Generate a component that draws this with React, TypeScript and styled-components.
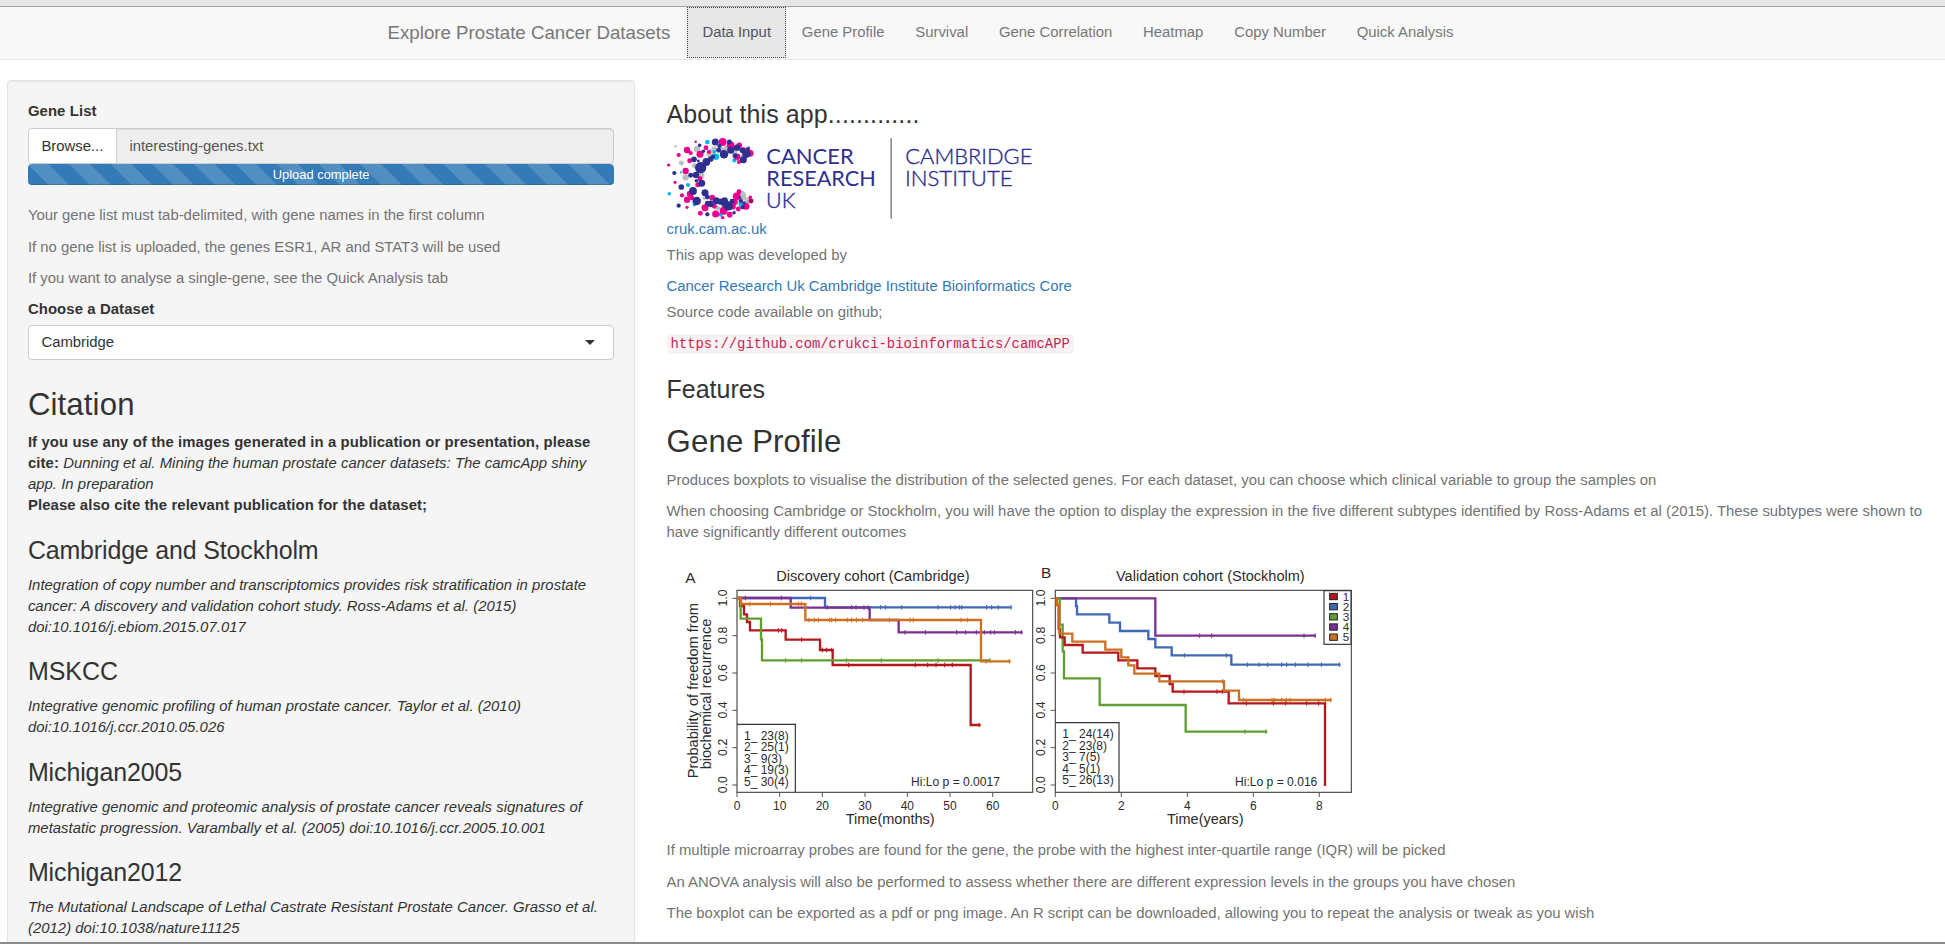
import React from "react";
import styled, { createGlobalStyle } from "styled-components";

const GlobalStyle = createGlobalStyle`
  * { box-sizing: border-box; }
  html, body { margin: 0; padding: 0; overflow: hidden; }
  body {
    background: #fff;
    color: #333;
    font: 14.88px/20.8px "Liberation Sans", Arial, sans-serif;
  }
  b { letter-spacing: 0.1px; }
  i { letter-spacing: 0.04px; }
`;

const Page = styled.div`
  height: 944px;
  overflow: hidden;
  display: flex;
  flex-direction: column;
  border-bottom: 2px solid #8a8a8a;
`;

const WindowEdge = styled.div`
  height: 6.5px;
  flex: none;
  background: #e6e6e6;
  border-bottom: 1.5px solid #a3a3a3;
`;

const Navbar = styled.nav`
  flex: none;
  height: 53px;
  margin-bottom: 20.5px;
  padding-left: 387.5px;
  display: flex;
  background: #f8f8f8;
  border-bottom: 1px solid #e7e7e7;
`;

const Brand = styled.div`
  width: 299.5px;
  font-size: 18.72px;
  line-height: 51px;
  color: #777;
  white-space: nowrap;
`;

const NavLink = styled.a<{ $active?: boolean }>`
  height: 51px;
  padding: 0 15.4px;
  line-height: 51px;
  white-space: nowrap;
  color: ${(p) => (p.$active ? "#555" : "#777")};
  background: ${(p) => (p.$active ? "#e7e7e7" : "transparent")};
  outline: ${(p) => (p.$active ? "1px dotted #444" : "none")};
  outline-offset: -1px;
`;

const Columns = styled.div`
  flex: 1;
  min-height: 0;
  display: flex;
  align-items: flex-start;
`;

const Sidebar = styled.aside`
  flex: none;
  width: 628px;
  height: 900px;
  margin-left: 7.4px;
  padding: 20px 20px 0 19.5px;
  background: #f5f5f5;
  border: 1px solid #e3e3e3;
  border-radius: 4px;
  box-shadow: inset 0 1px 1px rgba(0, 0, 0, 0.05);
`;

const Main = styled.main`
  flex: 1;
  min-width: 0;
  padding: 21px 10px 0 31.2px;
`;

const Label = styled.label<{ $gap: number }>`
  display: block;
  margin-bottom: ${(p) => p.$gap}px;
  font-weight: 700;
  letter-spacing: 0.1px;
`;

const FileField = styled.div`
  display: flex;
  height: 35.5px;
  border: 1px solid #ccc;
  border-radius: 4px;
  overflow: hidden;
  background: #eee;
  line-height: 34.5px;
  box-shadow: inset 0 1px 1px rgba(0, 0, 0, 0.075);
`;

const BrowseButton = styled.div`
  width: 88px;
  padding-left: 12.5px;
  background: #fff;
  border-right: 1px solid #ccc;
`;

const FileName = styled.div`
  padding-left: 12.5px;
  color: #555;
`;

const Progress = styled.div`
  height: 21px;
  margin-bottom: 20.5px;
  border-radius: 4px;
  background-color: #337ab7;
  background-image: linear-gradient(
    45deg,
    rgba(255, 255, 255, 0.15) 25%,
    transparent 25%,
    transparent 50%,
    rgba(255, 255, 255, 0.15) 50%,
    rgba(255, 255, 255, 0.15) 75%,
    transparent 75%
  );
  background-size: 41.6px 41.6px;
  box-shadow: inset 0 -1px 0 rgba(0, 0, 0, 0.15);
  color: #fff;
  font-size: 12.9px;
  line-height: 21px;
  text-align: center;
`;

const HelpText = styled.p<{ $gap?: number }>`
  margin: 0 0 ${(p) => p.$gap ?? 10.4}px;
  color: #737373;
`;

const Select = styled.div`
  height: 35px;
  margin-bottom: 28px;
  padding: 0 18px 0 12.5px;
  display: flex;
  align-items: center;
  justify-content: space-between;
  background: #fff;
  border: 1px solid #ccc;
  border-radius: 4px;
`;

const Caret = styled.span`
  border: 5px solid transparent;
  border-top-color: #333;
  border-bottom-width: 0;
`;

const H2 = styled.h2`
  margin: 0 0 10.4px;
  font-size: 31.2px;
  font-weight: 500;
  line-height: 34.3px;
  letter-spacing: 0.12px;
`;

const H3 = styled.h3<{ $after?: number; $track?: number }>`
  margin: 0 0 ${(p) => p.$after ?? 10.4}px;
  font-size: 24.96px;
  font-weight: 500;
  line-height: 27.5px;
  letter-spacing: ${(p) => p.$track ?? 0}px;
  white-space: nowrap;
`;

const Citation = styled.div<{ $gap?: number }>`
  margin-bottom: ${(p) => p.$gap ?? 21.5}px;
  white-space: nowrap;
`;

const Link = styled.a<{ $gap: number }>`
  display: block;
  margin-bottom: ${(p) => p.$gap}px;
  color: #337ab7;
`;

const CodeLine = styled.div`
  height: 20.8px;
  margin-bottom: 22px;
`;

const Code = styled.code`
  padding: 2px 4px;
  font: 13.87px "Liberation Mono", monospace;
  color: #c7254e;
  background: #f9f2f4;
  border-radius: 4px;
`;

const LogoDrawing = styled.svg`
  display: block;
  width: 380px;
  height: 82px;
`;

const Figure = styled.svg`
  display: block;
  width: 700px;
  height: 287px;
  margin: -2px 0 2.4px -1px;
`;

const NAVY = "#2e2f8f";
const PINK = "#ec008c";
const CYAN = "#00b5ee";
const GREY = "#bcbec0";

const DOTS: [string, number[][]][] = [
  [GREY, [[46, 169, 3.5], [110, 177, 9], [63, 219, 7], [102, 227, 7], [76, 262, 9], [124, 257, 8], [110, 285, 7], [151, 190, 12], [162, 177, 8], [184, 178, 7], [200, 175, 9], [222, 183, 9], [238, 203, 10], [265, 172, 5], [243, 317, 14], [262, 331, 9], [232, 334, 8], [172, 355, 7], [190, 368, 7], [151, 327, 6], [132, 325, 5]]],
  [CYAN, [[141, 156, 6.5], [62, 247, 3], [83, 285, 6], [27, 311, 5], [167, 200, 9], [162, 185, 5], [222, 211, 6], [102, 344, 5], [181, 374, 6], [242, 344, 7], [207, 155, 5]]],
  [PINK, [[106, 155, 3.5], [55, 195, 6], [80, 180, 9], [91, 189, 6], [119, 193, 10], [88, 212, 7], [25, 225, 4.5], [76, 243, 9], [44, 277, 4.5], [137, 173, 7], [146, 186, 6], [187, 156, 11], [211, 166, 11], [237, 166, 8], [269, 190, 10], [230, 200, 9], [236, 216, 6], [250, 180, 8], [113, 284, 7], [119, 266, 7], [65, 316, 6], [89, 312, 9], [80, 329, 9], [94, 323, 7], [80, 352, 4.5], [120, 370, 7], [134, 353, 10], [166, 372, 10], [190, 362, 11], [208, 374, 8], [187, 383, 5], [156, 323, 8], [236, 305, 7], [229, 319, 11], [222, 336, 9], [257, 349, 10], [234, 357, 7], [218, 350, 8], [270, 322, 5], [162, 349, 7]]],
  [NAVY, [[165, 156, 10], [118, 166, 5], [129, 184, 5], [101, 208, 8], [207, 156, 7], [177, 168, 6], [191, 193, 12], [211, 181, 10], [230, 173, 9], [246, 181, 8], [258, 191, 12], [249, 209, 10], [263, 177, 6], [224, 197, 7], [175, 181, 7], [121, 233, 16], [138, 216, 11], [151, 207, 8], [158, 200, 6], [42, 249, 6], [91, 256, 7], [107, 255, 9], [114, 213, 4], [124, 280, 10], [108, 272, 5], [63, 291, 8], [98, 303, 11], [55, 347, 6], [109, 333, 12], [134, 308, 10], [141, 321, 7], [151, 342, 9], [141, 340, 7], [168, 332, 10], [182, 335, 9], [193, 331, 9], [204, 348, 13], [215, 334, 7], [194, 340, 11], [141, 373, 6], [242, 333, 6], [251, 339, 5], [247, 352, 6], [221, 368, 5], [239, 323, 4]]],
  ["#a8006e", [[272, 333, 7]]],
];

function Logo() {
  return (
    <LogoDrawing viewBox="20 141 1140 246">
      {DOTS.map(([fill, dots]) => (
        <g key={fill} fill={fill}>
          {dots.map(([cx, cy, r], i) => (
            <circle key={i} cx={cx} cy={cy} r={r * 1.06} />
          ))}
        </g>
      ))}
      <g fontFamily="Lato, sans-serif" fontSize="65" fill={NAVY}>
        <text x="318" y="223" textLength="262" lengthAdjust="spacingAndGlyphs">CANCER</text>
        <text x="318" y="289" textLength="328" lengthAdjust="spacingAndGlyphs">RESEARCH</text>
        <g fontWeight="300" stroke={NAVY} strokeWidth="1.2">
          <text x="317" y="354" textLength="88" lengthAdjust="spacingAndGlyphs">UK</text>
          <text x="735" y="223" textLength="381" lengthAdjust="spacingAndGlyphs">CAMBRIDGE</text>
          <text x="734" y="289" textLength="323" lengthAdjust="spacingAndGlyphs">INSTITUTE</text>
        </g>
      </g>
      <line x1="692.5" x2="692.5" y1="145" y2="386" stroke="#8d8d90" strokeWidth="5" />
    </LogoDrawing>
  );
}

type Curve = { color: string; points: string; ticks: number[][] };

const RED = "#b3181f";
const BLUE = "#4068b4";
const GREEN = "#5f9f31";
const PURPLE = "#7b3190";
const ORANGE = "#cc7022";

const COHORT_A: Curve[] = [
  { color: BLUE, points: "231,141 495,141 495,169 1055,169", ticks: [[452, 141], [502, 169], [575, 169], [588, 169], [662, 169], [677, 169], [725, 169], [834, 169], [872, 169], [885, 169], [898, 169], [905, 169], [980, 169], [995, 169], [1015, 169], [1053, 169]] },
  { color: RED, points: "231,141 240,141 240,165 252,165 252,190 261,190 261,213 270,213 270,238 377,238 377,266 480,266 480,297 518,297 518,342 932,342 932,522 962,522", ticks: [[355, 238], [365, 238], [425, 266], [487, 297], [500, 297], [515, 297], [566, 342], [766, 342], [803, 342], [828, 342], [854, 342], [877, 342], [957, 522]] },
  { color: GREEN, points: "231,141 242,141 242,203 303,203 303,265 306,265 306,328 992,328", ticks: [[377, 328], [425, 328], [559, 328], [664, 328], [834, 328], [990, 328]] },
  { color: PURPLE, points: "231,141 392,141 392,170 629,170 629,207 716,207 716,244 1088,244", ticks: [[256, 141], [364, 141], [612, 170], [624, 170], [735, 244], [796, 244], [890, 244], [917, 244], [949, 244], [973, 244], [992, 244], [1003, 244], [1066, 244], [1084, 244]] },
  { color: ORANGE, points: "231,141 243,141 243,159 436,159 436,207 963,207 963,331 1052,331", ticks: [[270, 159], [331, 159], [415, 159], [424, 159], [447, 207], [463, 207], [475, 207], [509, 207], [515, 207], [527, 207], [562, 207], [575, 207], [589, 207], [608, 207], [688, 207], [750, 207], [760, 207], [903, 207], [922, 207], [978, 331], [1048, 331]] },
];

const COHORT_B: Curve[] = [
  { color: BLUE, points: "76,142 138,142 138,165 141,165 141,190 238,190 238,215 270,215 270,240 355,240 355,264 376,264 376,289 425,289 425,313 604,313 604,341 932,341", ticks: [[463, 313], [589, 313], [652, 341], [687, 341], [713, 341], [755, 341], [770, 341], [796, 341], [834, 341], [874, 341], [928, 341]] },
  { color: PURPLE, points: "76,142 376,142 376,254 858,254", ticks: [[509, 254], [545, 254], [822, 254], [855, 254]] },
  { color: GREEN, points: "76,142 89,142 89,221 98,221 98,301 102,301 102,382 209,382 209,462 467,462 467,542 712,542", ticks: [[645, 542], [708, 542]] },
  { color: RED, points: "76,142 80,142 80,162 86,162 86,234 90,234 90,259 104,259 104,282 158,282 158,305 265,305 265,328 322,328 322,352 376,352 376,375 419,375 419,399 428,399 428,422 596,422 596,457 885,457 885,705", ticks: [[462, 422], [561, 422], [577, 422], [649, 457], [730, 457], [766, 457], [830, 457], [866, 457], [886, 457]] },
  { color: ORANGE, points: "76,142 80,142 80,162 88,162 88,248 127,248 127,272 226,272 226,296 274,296 274,319 295,319 295,343 313,343 313,368 388,368 388,391 582,391 582,419 627,419 627,447 905,447", ticks: [[578, 391], [640, 447], [726, 447], [733, 447], [755, 447], [769, 447], [780, 447], [886, 447], [902, 447]] },
];

function Curves({ curves }: { curves: Curve[] }) {
  return (
    <>
      {curves.map((c) => (
        <g key={c.color} stroke={c.color} fill="none">
          <polyline points={c.points} strokeWidth="7" />
          {c.ticks.map(([x, y], i) => (
            <line key={i} x1={x} x2={x} y1={y - 7} y2={y + 7} strokeWidth="3" />
          ))}
        </g>
      ))}
    </>
  );
}

const Y_LABELS: [string, number][] = [["1.0", 142], ["0.8", 254], ["0.6", 366], ["0.4", 478], ["0.2", 590], ["0.0", 702]];

function YAxis({ x }: { x: number }) {
  return (
    <>
      {Y_LABELS.map(([t, y]) => (
        <g key={t}>
          <line x1={x - 14} x2={x} y1={y} y2={y} stroke="#555" strokeWidth="3" />
          <text transform={`translate(${x - 31} ${y - 1}) rotate(-90)`} fontSize="37" textAnchor="middle">{t}</text>
        </g>
      ))}
    </>
  );
}

function XAxis({ labels }: { labels: [string, number][] }) {
  return (
    <>
      {labels.map(([t, x]) => (
        <g key={t}>
          <line x1={x} x2={x} y1="724" y2="738" stroke="#555" strokeWidth="3" />
          <text x={x} y="777" fontSize="36" textAnchor="middle">{t}</text>
        </g>
      ))}
    </>
  );
}

function Counts({ x, y, rows }: { x: number; y: number; rows: string[] }) {
  return (
    <>
      {rows.map((r, i) => (
        <g key={r} fontSize="36">
          <text x={x} y={y + i * 34.5}>{i + 1}_</text>
          <text x={x + 50} y={y + i * 34.5}>{r}</text>
        </g>
      ))}
    </>
  );
}

function SurvivalFigure() {
  return (
    <Figure viewBox="18 0 2100 861" fontFamily="'Liberation Sans', Arial, sans-serif" fill="#2b2b2b">
      <g>
        <text x="76" y="95" fontSize="46">A</text>
        <text x="349" y="89" fontSize="42" textLength="580" lengthAdjust="spacingAndGlyphs">Discovery cohort (Cambridge)</text>
        <text transform="translate(114 682) rotate(-90)" fontSize="42" textLength="526" lengthAdjust="spacingAndGlyphs">Probability of freedom from</text>
        <text transform="translate(153 655) rotate(-90)" fontSize="42" textLength="452" lengthAdjust="spacingAndGlyphs">biochemical recurrence</text>
        <rect x="231" y="118" width="887" height="606" fill="none" stroke="#4a4a4a" strokeWidth="3.5" />
        <YAxis x={231} />
        <XAxis labels={[["0", 231], ["10", 359], ["20", 487], ["30", 615], ["40", 742], ["50", 870], ["60", 998]]} />
        <Curves curves={COHORT_A} />
        <path d="M231 520H406V724" fill="none" stroke="#333" strokeWidth="3.5" />
        <Counts x={252} y={566} rows={["23(8)", "25(1)", "9(3)", "19(3)", "30(4)"]} />
        <text x="753" y="704" fontSize="37" textLength="267" lengthAdjust="spacingAndGlyphs">Hi:Lo p = 0.0017</text>
        <text x="557" y="818" fontSize="42" textLength="267" lengthAdjust="spacingAndGlyphs">Time(months)</text>
      </g>
      <g transform="translate(1110 0)">
        <text x="33" y="82" fontSize="46">B</text>
        <text x="258" y="89" fontSize="42" textLength="566" lengthAdjust="spacingAndGlyphs">Validation cohort (Stockholm)</text>
        <rect x="76" y="118" width="888" height="606" fill="none" stroke="#4a4a4a" strokeWidth="3.5" />
        <YAxis x={76} />
        <XAxis labels={[["0", 76], ["2", 274], ["4", 472], ["6", 670], ["8", 868]]} />
        <Curves curves={COHORT_B} />
        <path d="M76 515H267V724" fill="none" stroke="#333" strokeWidth="3.5" />
        <Counts x={97} y={561} rows={["24(14)", "23(8)", "7(5)", "5(1)", "26(13)"]} />
        <text x="615" y="706" fontSize="37" textLength="247" lengthAdjust="spacingAndGlyphs">Hi:Lo p = 0.016</text>
        <text x="411" y="818" fontSize="42" textLength="230" lengthAdjust="spacingAndGlyphs">Time(years)</text>
        <rect x="882" y="119" width="81" height="161" fill="#fff" stroke="#333" strokeWidth="3.5" />
        {[RED, BLUE, GREEN, PURPLE, ORANGE].map((c, i) => (
          <g key={c}>
            <rect x="899" y={127 + i * 30.5} width="23" height="19" fill={c} stroke="#222" strokeWidth="3" />
            <text x="938" y={149 + i * 30.5} fontSize="35">{i + 1}</text>
          </g>
        ))}
      </g>
    </Figure>
  );
}

const TABS = ["Data Input", "Gene Profile", "Survival", "Gene Correlation", "Heatmap", "Copy Number", "Quick Analysis"];

export default function App() {
  return (
    <Page>
      <GlobalStyle />
      <WindowEdge />
      <Navbar>
        <Brand>Explore Prostate Cancer Datasets</Brand>
        {TABS.map((t, i) => (
          <NavLink key={t} $active={i === 0}>{t}</NavLink>
        ))}
      </Navbar>
      <Columns>
        <Sidebar>
          <Label $gap={6.7}>Gene List</Label>
          <FileField>
            <BrowseButton>Browse...</BrowseButton>
            <FileName>interesting-genes.txt</FileName>
          </FileField>
          <Progress>Upload complete</Progress>
          <HelpText>Your gene list must tab-delimited, with gene names in the first column</HelpText>
          <HelpText>If no gene list is uploaded, the genes ESR1, AR and STAT3 will be used</HelpText>
          <HelpText>If you want to analyse a single-gene, see the Quick Analysis tab</HelpText>
          <Label $gap={4.7}>Choose a Dataset</Label>
          <Select>
            Cambridge
            <Caret />
          </Select>
          <H2>Citation</H2>
          <Citation $gap={22}>
            <b>If you use any of the images generated in a publication or presentation, please<br />cite:</b>{" "}
            <i>Dunning et al. Mining the human prostate cancer datasets: The camcApp shiny<br />app. In preparation</i>
            <br />
            <b>Please also cite the relevant publication for the dataset;</b>
          </Citation>
          <H3 $track={-0.15}>Cambridge and Stockholm</H3>
          <Citation $gap={20.3}>
            <i>Integration of copy number and transcriptomics provides risk stratification in prostate<br />cancer: A discovery and validation cohort study. Ross-Adams et al. (2015)<br />doi:10.1016/j.ebiom.2015.07.017</i>
          </Citation>
          <H3>MSKCC</H3>
          <Citation>
            <i>Integrative genomic profiling of human prostate cancer. Taylor et al. (2010)<br />doi:10.1016/j.ccr.2010.05.026</i>
          </Citation>
          <H3 $track={-0.1}>Michigan2005</H3>
          <Citation $gap={20.8}>
            <i>Integrative genomic and proteomic analysis of prostate cancer reveals signatures of<br />metastatic progression. Varambally et al. (2005) doi:10.1016/j.ccr.2005.10.001</i>
          </Citation>
          <H3 $track={-0.1}>Michigan2012</H3>
          <Citation>
            <i>The Mutational Landscape of Lethal Castrate Resistant Prostate Cancer. Grasso et al.<br />(2012) doi:10.1038/nature11125</i>
          </Citation>
        </Sidebar>
        <Main>
          <H3 $after={8.5} $track={0.12}>About this app.............</H3>
          <Logo />
          <Link $gap={5.2}>cruk.cam.ac.uk</Link>
          <HelpText>This app was developed by</HelpText>
          <Link $gap={5.2}>Cancer Research Uk Cambridge Institute Bioinformatics Core</Link>
          <HelpText>Source code available on github;</HelpText>
          <CodeLine><Code>https://github.com/crukci-bioinformatics/camcAPP</Code></CodeLine>
          <H3 $after={21.6}>Features</H3>
          <H2>Gene Profile</H2>
          <HelpText>Produces boxplots to visualise the distribution of the selected genes. For each dataset, you can choose which clinical variable to group the samples on</HelpText>
          <HelpText>
            When choosing Cambridge or Stockholm, you will have the option to display the expression in the five different subtypes identified by Ross-Adams et al (2015). These subtypes were shown to<br />have significantly different outcomes
          </HelpText>
          <SurvivalFigure />
          <HelpText>If multiple microarray probes are found for the gene, the probe with the highest inter-quartile range (IQR) will be picked</HelpText>
          <HelpText>An ANOVA analysis will also be performed to assess whether there are different expression levels in the groups you have chosen</HelpText>
          <HelpText>The boxplot can be exported as a pdf or png image. An R script can be downloaded, allowing you to repeat the analysis or tweak as you wish</HelpText>
        </Main>
      </Columns>
    </Page>
  );
}
